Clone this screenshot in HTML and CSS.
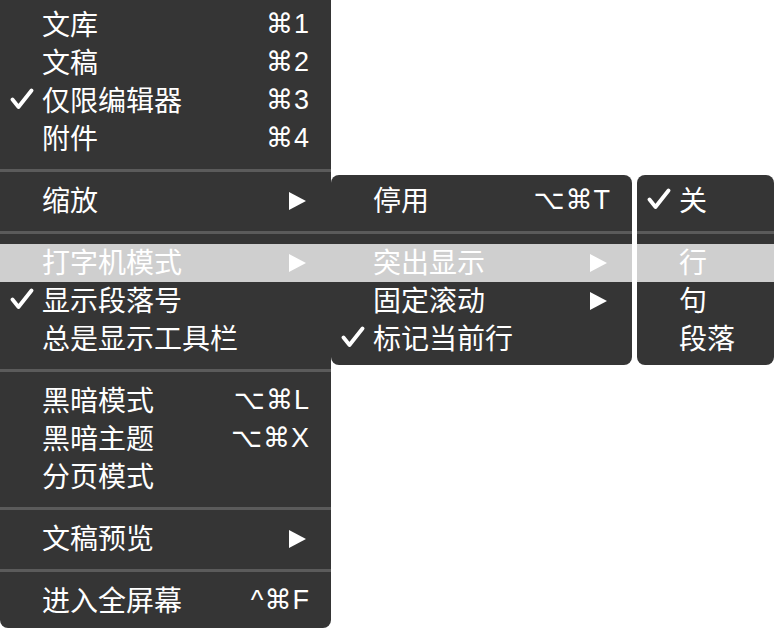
FILE: index.html
```html
<!DOCTYPE html>
<html lang="zh-CN">
<head>
    <meta charset="UTF-8">
    <meta name="viewport" content="width=device-width, initial-scale=1.0">
    <title>显示菜单</title>
    <link rel="stylesheet" href="styles.css">
</head>
<body>
    <div class="menus">
        <!-- 主菜单 -->
        <div class="menu menu-main">
            <div class="item"><span class="check"></span><span class="label">文库</span><span class="key">⌘1</span></div>
            <div class="item"><span class="check"></span><span class="label">文稿</span><span class="key">⌘2</span></div>
            <div class="item">
                <span class="check"><svg viewBox="0 0 24 22" width="24" height="22"><polyline points="2.5,11.5 8.5,19 21.5,2.5"/></svg></span>
                <span class="label">仅限编辑器</span><span class="key">⌘3</span>
            </div>
            <div class="item"><span class="check"></span><span class="label">附件</span><span class="key">⌘4</span></div>
            <div class="sep"></div>
            <div class="item">
                <span class="check"></span><span class="label">缩放</span>
                <svg class="arrow" viewBox="0 0 17 18" width="17" height="18"><polygon points="0,0 17,9 0,18"/></svg>
            </div>
            <div class="sep"></div>
            <div class="item is-active">
                <span class="check"></span><span class="label">打字机模式</span>
                <svg class="arrow" viewBox="0 0 17 18" width="17" height="18"><polygon points="0,0 17,9 0,18"/></svg>
            </div>
            <div class="item">
                <span class="check"><svg viewBox="0 0 24 22" width="24" height="22"><polyline points="2.5,11.5 8.5,19 21.5,2.5"/></svg></span>
                <span class="label">显示段落号</span>
            </div>
            <div class="item"><span class="check"></span><span class="label">总是显示工具栏</span></div>
            <div class="sep"></div>
            <div class="item"><span class="check"></span><span class="label">黑暗模式</span><span class="key">⌥⌘L</span></div>
            <div class="item"><span class="check"></span><span class="label">黑暗主题</span><span class="key">⌥⌘X</span></div>
            <div class="item"><span class="check"></span><span class="label">分页模式</span></div>
            <div class="sep"></div>
            <div class="item">
                <span class="check"></span><span class="label">文稿预览</span>
                <svg class="arrow" viewBox="0 0 17 18" width="17" height="18"><polygon points="0,0 17,9 0,18"/></svg>
            </div>
            <div class="sep"></div>
            <div class="item"><span class="check"></span><span class="label">进入全屏幕</span><span class="key">^⌘F</span></div>
        </div>

        <!-- 打字机模式 子菜单 -->
        <div class="menu submenu submenu-mode">
            <div class="item"><span class="check"></span><span class="label">停用</span><span class="key">⌥⌘T</span></div>
            <div class="sep"></div>
            <div class="item is-active">
                <span class="check"></span><span class="label">突出显示</span>
                <svg class="arrow" viewBox="0 0 17 18" width="17" height="18"><polygon points="0,0 17,9 0,18"/></svg>
            </div>
            <div class="item">
                <span class="check"></span><span class="label">固定滚动</span>
                <svg class="arrow" viewBox="0 0 17 18" width="17" height="18"><polygon points="0,0 17,9 0,18"/></svg>
            </div>
            <div class="item">
                <span class="check"><svg viewBox="0 0 24 22" width="24" height="22"><polyline points="2.5,11.5 8.5,19 21.5,2.5"/></svg></span>
                <span class="label">标记当前行</span>
            </div>
        </div>

        <!-- 突出显示 子菜单 -->
        <div class="menu submenu submenu-highlight">
            <div class="item">
                <span class="check"><svg viewBox="0 0 24 22" width="24" height="22"><polyline points="2.5,11.5 8.5,19 21.5,2.5"/></svg></span>
                <span class="label">关</span>
            </div>
            <div class="sep"></div>
            <div class="item is-active"><span class="check"></span><span class="label">行</span></div>
            <div class="item"><span class="check"></span><span class="label">句</span></div>
            <div class="item"><span class="check"></span><span class="label">段落</span></div>
        </div>
    </div>
</body>
</html>
```

FILE: styles.css
```css
body {
    margin: 0;
    background-color: #fff;
    font-family: "Noto Sans CJK SC", "Noto Sans", sans-serif;
}
.menus {
    display: flex;
    align-items: flex-start;
    gap: 5px;
}
.menu {
    background-color: #353535;
    color: #fff;
    padding: 6px 0 8px;
}
.menu-main {
    width: 331px;
    border-radius: 0 0 8px 8px;
    margin-right: -5px; /* 子菜单紧贴主菜单 */
}
.submenu {
    margin-top: 175px;
    padding: 7px 0 7px;
    border-radius: 8px;
}
.submenu-mode {
    width: 301px;
}
.submenu-highlight {
    width: 137px;
}
.item {
    display: flex;
    align-items: center;
    height: 38px;
    padding: 0 21px 0 10px;
    font-size: 28px;
}
.item.is-active {
    background-color: #cfcfcf;
}
.check {
    width: 32px;
    flex-shrink: 0;
    display: flex;
    align-items: center;
    margin-bottom: 4px;
}
.check polyline {
    fill: none;
    stroke: #fff;
    stroke-width: 3.8;
    stroke-linecap: round;
    stroke-linejoin: round;
}
.label {
    flex: 1;
    white-space: nowrap;
    line-height: 34px;
    margin-bottom: 4px;
}
.key {
    font-family: "Liberation Sans", "DejaVu Sans", sans-serif;
    font-size: 27px;
    letter-spacing: 1px;
    margin-bottom: 2px;
}
.arrow {
    margin-right: 4px;
}
.arrow polygon {
    fill: #fff;
}
.sep {
    height: 24px;
    display: flex;
    align-items: center;
}
.sep::before {
    content: "";
    display: block;
    width: 100%;
    height: 3px;
    background-color: #5b5b5b;
}
```
